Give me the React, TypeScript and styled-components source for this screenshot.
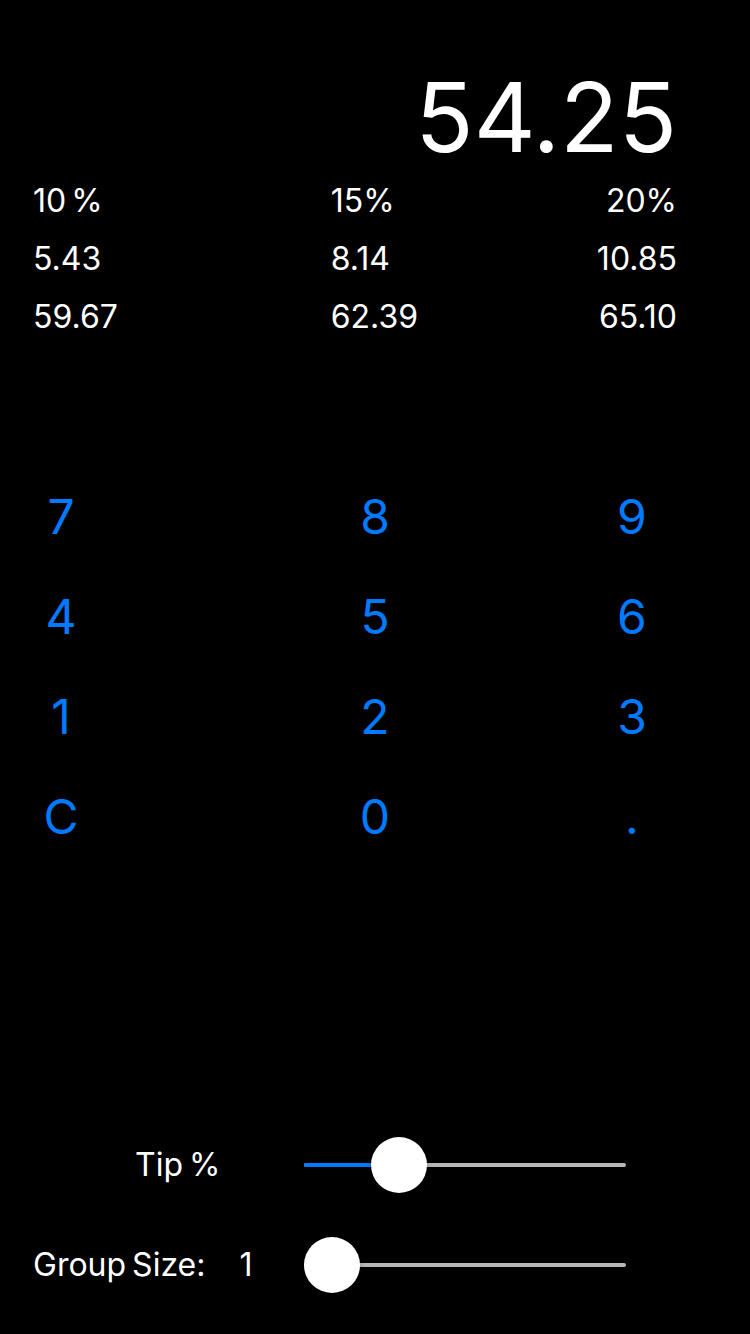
import React from "react";
import styled, { createGlobalStyle } from "styled-components";

const GlobalStyle = createGlobalStyle`
  html, body {
    margin: 0;
    padding: 0;
    background: #000;
  }
  body {
    font-family: Inter, "Liberation Sans", Arial, sans-serif;
    color: #fff;
  }
  * { box-sizing: border-box; }
`;

const Screen = styled.div`
  width: 750px;
  height: 1334px;
  background: #000;
  display: flex;
  flex-direction: column;
  padding-top: 67px;
  overflow: hidden;
`;

const Total = styled.div`
  font-size: 96px;
  line-height: 100px;
  height: 100px;
  text-align: right;
  padding-right: 73px;
  font-weight: 400;
  margin-bottom: 5px;
`;

const Table = styled.div`
  display: grid;
  grid-template-columns: 1fr 1fr 1fr;
  padding: 0 73px 0 33px;
`;

const Cell = styled.div<{ $align: "left" | "right"; $indent?: number }>`
  font-size: 32px;
  line-height: 58px;
  height: 58px;
  word-spacing: -4px;
  text-align: ${(p) => p.$align};
  padding-left: ${(p) => p.$indent ?? 0}px;
`;

const Keypad = styled.div`
  margin-top: 121px;
  display: grid;
  grid-template-columns: 122px 192px 122px 135px 122px;
  grid-auto-rows: 100px;
`;

const Key = styled.button<{ $col: number }>`
  grid-column: ${(p) => p.$col * 2 - 1};
  background: none;
  border: none;
  padding: 0;
  color: #007aff;
  font-family: Inter, "Liberation Sans", Arial, sans-serif;
  font-size: 48px;
  line-height: 100px;
  text-align: center;
  cursor: pointer;
`;

const Controls = styled.div`
  margin-top: 248px;
  display: flex;
  flex-direction: column;
`;

const ControlRow = styled.div`
  height: 100px;
  display: grid;
  grid-template-columns: 271px 322px;
  padding-left: 33px;
  align-items: center;
`;

const LabelArea = styled.div<{ $indent: number }>`
  display: flex;
  align-items: center;
  padding-left: ${(p) => p.$indent}px;
  font-size: 32px;
  line-height: 100px;
  word-spacing: -3px;
  white-space: nowrap;
`;

const Value = styled.span`
  margin-left: 34px;
`;

const Track = styled.div`
  position: relative;
  height: 4px;
  border-radius: 2px;
  background: #b6b6b6;
`;

const Fill = styled.div`
  position: absolute;
  left: 0;
  top: 0;
  height: 4px;
  border-radius: 2px;
  background: #007aff;
`;

const Thumb = styled.div`
  position: absolute;
  top: 50%;
  width: 56px;
  height: 56px;
  margin-top: -28px;
  margin-left: -28px;
  border-radius: 50%;
  background: #fff;
  box-shadow: 0 3px 6px rgba(0, 0, 0, 0.25);
`;

const Slider: React.FC<{ value: number }> = ({ value }) => {
  const pos = 28 + value * (322 - 56);
  return (
    <Track>
      <Fill style={{ width: pos }} />
      <Thumb style={{ left: pos }} />
    </Track>
  );
};

const rows: [string, string, string][] = [
  ["10 %", "15%", "20%"],
  ["5.43", "8.14", "10.85"],
  ["59.67", "62.39", "65.10"],
];

const keys = ["7", "8", "9", "4", "5", "6", "1", "2", "3", "C", "0", "."];

export default function App() {
  return (
    <>
      <GlobalStyle />
      <Screen>
        <Total>54.25</Total>
        <Table>
          {rows.map((r, i) => (
            <React.Fragment key={i}>
              <Cell $align="left">{r[0]}</Cell>
              <Cell $align="left" $indent={83}>
                {r[1]}
              </Cell>
              <Cell $align="right">{r[2]}</Cell>
            </React.Fragment>
          ))}
        </Table>
        <Keypad>
          {keys.map((k, i) => (
            <Key key={k} $col={(i % 3) + 1}>
              {k}
            </Key>
          ))}
        </Keypad>
        <Controls>
          <ControlRow>
            <LabelArea $indent={102}>Tip %</LabelArea>
            <Slider value={0.25} />
          </ControlRow>
          <ControlRow>
            <LabelArea $indent={0}>
              Group Size:<Value>1</Value>
            </LabelArea>
            <Slider value={0} />
          </ControlRow>
        </Controls>
      </Screen>
    </>
  );
}
